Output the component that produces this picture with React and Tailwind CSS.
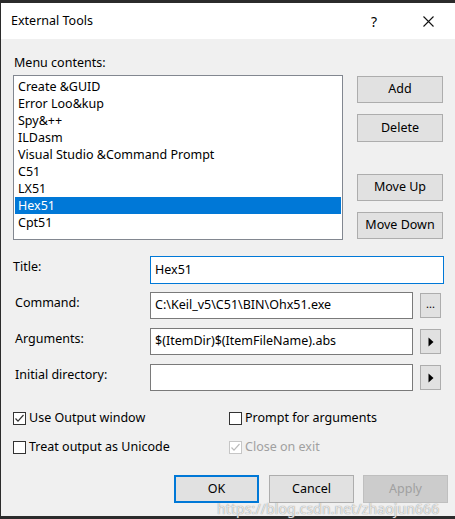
import React from 'react';

const items = [
  'Create &GUID',
  'Error Loo&kup',
  'Spy&++',
  'ILDasm',
  'Visual Studio &Command Prompt',
  'C51',
  'LX51',
  'Hex51',
  'Cpt51',
];

function Check({ checked, disabled }) {
  return (
    <span
      className={`flex h-[13px] w-[13px] items-center justify-center border bg-white ${
        disabled ? 'border-[#c6c6c6] bg-[#f0f0f0]' : 'border-[#333333]'
      }`}
    >
      {checked && (
        <svg width="11" height="11" viewBox="0 0 11 11">
          <path
            d="M1.5 5.5 L4 8.2 L9.5 2"
            fill="none"
            stroke={disabled ? '#bcbcbc' : '#333333'}
            strokeWidth="1.2"
          />
        </svg>
      )}
    </span>
  );
}

function SideButton({ children, className = '' }) {
  return (
    <button className={`flex h-[27px] w-[86px] items-center justify-center border border-[#adadad] bg-[#e1e1e1] text-black ${className}`}>
      {children}
    </button>
  );
}

function Arrow() {
  return (
    <svg width="6" height="10" viewBox="0 0 6 10">
      <path d="M0.5 0.5 L5.5 5 L0.5 9.5 Z" fill="#000" />
    </svg>
  );
}

export default function App() {
  return (
    <div
      className="flex h-[519px] w-[455px] flex-col bg-[#2b2b2b] pl-[1px] pt-[3px] pb-[3px] text-[12.5px] text-black"
      style={{ fontFamily: '"Noto Sans", "Open Sans", sans-serif' }}
    >
      {/* title bar */}
      <div className="flex h-[36px] items-center bg-white pl-[10px]">
        <span className="text-[12.5px]">External Tools</span>
        <span className="ml-auto mr-[46px] text-[14px]">?</span>
        <svg className="mr-[21px]" width="11" height="11" viewBox="0 0 11 11">
          <path d="M0.5 0.5 L10.5 10.5 M10.5 0.5 L0.5 10.5" stroke="#111" strokeWidth="1.1" />
        </svg>
      </div>

      {/* body */}
      <div className="relative flex flex-1 flex-col bg-[#f0f0f0] pl-[12px]">
        <div className="mt-[15px] h-[17px] leading-[17px] pl-[1px]">Menu contents:</div>

        <div className="mt-[4px] flex">
          <div className="h-[165px] w-[330px] border border-[#828790] bg-white pt-[2px] pl-[1px] pr-[1px]">
            {items.map((it) => (
              <div
                key={it}
                className={`h-[17px] pl-[3px] leading-[17px] ${
                  it === 'Hex51' ? 'bg-[#0078d7] text-white' : ''
                }`}
              >
                {it}
              </div>
            ))}
          </div>
          <div className="ml-[14px] flex flex-col">
            <SideButton className="mt-[1px]">Add</SideButton>
            <SideButton className="mt-[11px] h-[28px]">Delete</SideButton>
            <SideButton className="mt-[32px]">Move Up</SideButton>
            <SideButton className="mt-[11px]">Move Down</SideButton>
          </div>
        </div>

        {/* form */}
        <div className="mt-[16px] flex">
          <div className="w-[137px] pt-[2px]">Title:</div>
          <div className="flex h-[28px] w-[294px] items-center border border-[#0078d7] bg-white pl-[4px]">Hex51</div>
        </div>
        <div className="mt-[8px] flex">
          <div className="w-[137px] pl-[2px] pt-[2px]">Command:</div>
          <div className="flex h-[27px] w-[263px] items-center border border-[#7a7a7a] bg-white pl-[4px]">
            C:\Keil_v5\C51\BIN\Ohx51.exe
          </div>
          <button className="ml-[7px] mt-[1px] flex h-[25px] w-[21px] items-start justify-center border border-[#adadad] bg-[#e1e1e1] pt-[4px] text-[11px] leading-[12px]">
            ...
          </button>
        </div>
        <div className="mt-[9px] flex">
          <div className="w-[137px] pl-[2px] pt-[2px]">Arguments:</div>
          <div className="flex h-[27px] w-[263px] items-center border border-[#7a7a7a] bg-white pl-[4px]">
            $(ItemDir)$(ItemFileName).abs
          </div>
          <button className="ml-[7px] mt-[1px] flex h-[25px] w-[21px] items-center justify-center border border-[#adadad] bg-[#e1e1e1]">
            <Arrow />
          </button>
        </div>
        <div className="mt-[9px] flex">
          <div className="w-[137px] pl-[2px] pt-[2px]">Initial directory:</div>
          <div className="h-[27px] w-[263px] border border-[#7a7a7a] bg-white" />
          <button className="ml-[7px] mt-[1px] flex h-[25px] w-[21px] items-center justify-center border border-[#adadad] bg-[#e1e1e1]">
            <Arrow />
          </button>
        </div>

        {/* checkboxes */}
        <div className="mt-[21px] grid grid-cols-[216px_1fr] gap-y-[16px]">
          <label className="flex h-[13px] items-center gap-[3px]">
            <Check checked />
            <span>Use Output window</span>
          </label>
          <label className="flex h-[13px] items-center gap-[3px]">
            <Check />
            <span>Prompt for arguments</span>
          </label>
          <label className="flex h-[13px] items-center gap-[3px]">
            <Check />
            <span>Treat output as Unicode</span>
          </label>
          <label className="flex h-[13px] items-center gap-[3px] text-[#a0a0a0]">
            <Check checked disabled />
            <span>Close on exit</span>
          </label>
        </div>

        {/* dialog buttons */}
        <div className="mt-[21px] flex pl-[161px]">
          <button className="flex h-[28px] w-[85px] items-center justify-center border-2 border-[#0078d7] bg-[#e1e1e1]">OK</button>
          <button className="ml-[10px] flex h-[28px] w-[85px] items-center justify-center border border-[#adadad] bg-[#e1e1e1]">Cancel</button>
          <button className="ml-[9px] flex h-[28px] w-[85px] items-center justify-center border border-[#bfbfbf] bg-[#cccccc] text-[#a0a0a0]">Apply</button>
        </div>

        <span className="pointer-events-none absolute left-[216px] top-[459px] whitespace-nowrap text-[14px] tracking-[0.1px] text-white/80 [text-shadow:0_0_1px_#666]">
          https://blog.csdn.net/zhaojun666
        </span>
      </div>
    </div>
  );
}
